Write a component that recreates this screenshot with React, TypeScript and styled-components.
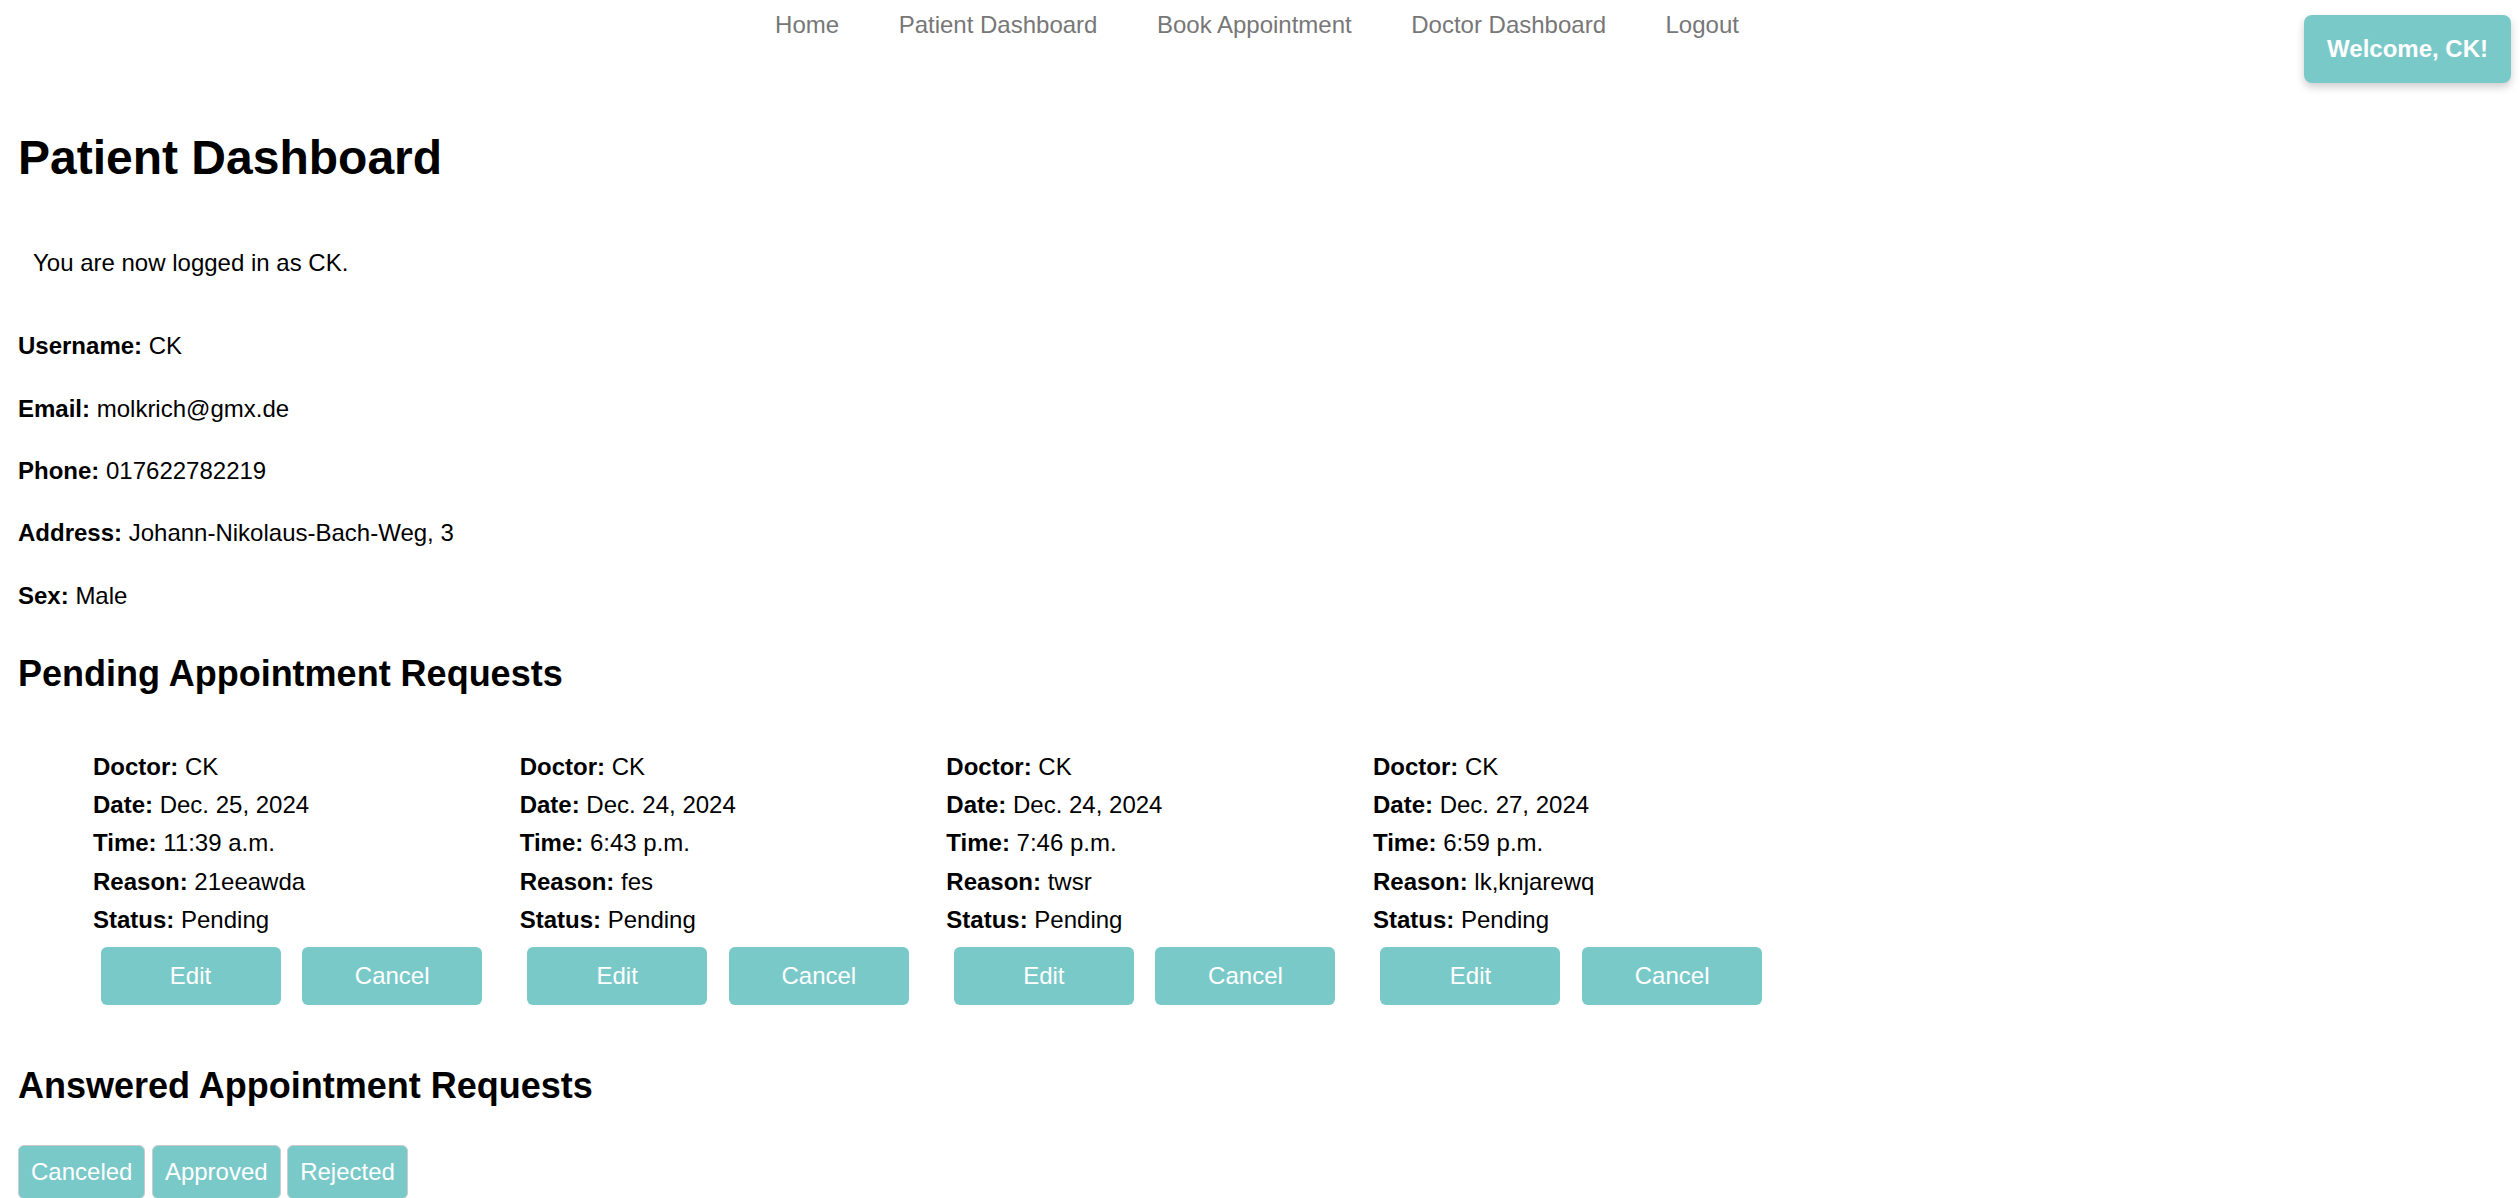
import styled, { createGlobalStyle } from 'styled-components'

const teal = '#7ac9c9'

const GlobalStyle = createGlobalStyle`
  html, body {
    margin: 0;
    padding: 0;
    background: #fff;
  }
  body {
    font-family: 'Liberation Sans', Arial, sans-serif;
    font-size: 24px;
    line-height: 1.6;
    color: #000;
  }
`

const Header = styled.header`
  display: grid;
  grid-template-columns: 1fr auto 1fr;
  align-items: start;
  height: 88px;
`

const Nav = styled.nav`
  grid-column: 2;
  display: flex;
  gap: 59.5px;
  padding-top: 5.5px;
  margin-right: 6px;
`

const NavLink = styled.a`
  color: #777;
  text-decoration: none;
  white-space: nowrap;
`

const Welcome = styled.div`
  grid-column: 3;
  justify-self: end;
  margin: 15px 9px 0 0;
  padding: 15px 23px;
  background: ${teal};
  color: #fff;
  font-weight: 700;
  line-height: 38.4px;
  border-radius: 8px;
  box-shadow: 0 4px 8px rgba(0, 0, 0, 0.2);
`

const Main = styled.main`
  padding: 0 18px;
`

const Title = styled.h1`
  font-size: 48px;
  font-weight: 700;
  margin: 32px 0;
`

const Message = styled.div`
  padding: 15px;
  margin-bottom: 30px;
`

const Detail = styled.p`
  margin: 24px 0;
`

const SectionTitle = styled.h2`
  font-size: 36px;
  font-weight: 700;
  margin: 29.9px 0;
`

const CardList = styled.ul`
  list-style: none;
  display: flex;
  margin: 24px 0;
  padding: 0 0 0 60px;
`

const Card = styled.li`
  padding: 15px;
`

const Line = styled.div`
  white-space: nowrap;
`

const ButtonRow = styled.div`
  display: flex;
  gap: 6.67px;
`

const ActionButton = styled.button`
  width: 180px;
  margin: 7.5px;
  padding: 15px 0;
  border: none;
  border-radius: 6px;
  background: ${teal};
  color: #fff;
  font-family: inherit;
  font-size: 24px;
  line-height: normal;
  cursor: pointer;
`

const Tabs = styled.div`
  display: flex;
  gap: 6.5px;
`

const Tab = styled.button`
  padding: 12px;
  border: 1px solid #ccc;
  border-radius: 6px;
  background: ${teal};
  color: #fff;
  font-family: inherit;
  font-size: 24px;
  line-height: normal;
  cursor: pointer;
`

type Appointment = {
  doctor: string
  date: string
  time: string
  reason: string
  status: string
}

const pending: Appointment[] = [
  { doctor: 'CK', date: 'Dec. 25, 2024', time: '11:39 a.m.', reason: '21eeawda', status: 'Pending' },
  { doctor: 'CK', date: 'Dec. 24, 2024', time: '6:43 p.m.', reason: 'fes', status: 'Pending' },
  { doctor: 'CK', date: 'Dec. 24, 2024', time: '7:46 p.m.', reason: 'twsr', status: 'Pending' },
  { doctor: 'CK', date: 'Dec. 27, 2024', time: '6:59 p.m.', reason: 'lk,knjarewq', status: 'Pending' },
]

const profile = [
  ['Username', 'CK'],
  ['Email', 'molkrich@gmx.de'],
  ['Phone', '017622782219'],
  ['Address', 'Johann-Nikolaus-Bach-Weg, 3'],
  ['Sex', 'Male'],
]

export default function App() {
  return (
    <>
      <GlobalStyle />
      <Header>
        <Nav>
          <NavLink href="#">Home</NavLink>
          <NavLink href="#">Patient Dashboard</NavLink>
          <NavLink href="#">Book Appointment</NavLink>
          <NavLink href="#">Doctor Dashboard</NavLink>
          <NavLink href="#">Logout</NavLink>
        </Nav>
        <Welcome>Welcome, CK!</Welcome>
      </Header>
      <Main>
        <Title>Patient Dashboard</Title>
        <Message>You are now logged in as CK.</Message>
        {profile.map(([label, value]) => (
          <Detail key={label}>
            <strong>{label}:</strong> {value}
          </Detail>
        ))}

        <SectionTitle>Pending Appointment Requests</SectionTitle>
        <CardList>
          {pending.map((a, i) => (
            <Card key={i}>
              <Line><strong>Doctor:</strong> {a.doctor}</Line>
              <Line><strong>Date:</strong> {a.date}</Line>
              <Line><strong>Time:</strong> {a.time}</Line>
              <Line><strong>Reason:</strong> {a.reason}</Line>
              <Line><strong>Status:</strong> {a.status}</Line>
              <ButtonRow>
                <ActionButton>Edit</ActionButton>
                <ActionButton>Cancel</ActionButton>
              </ButtonRow>
            </Card>
          ))}
        </CardList>

        <SectionTitle>Answered Appointment Requests</SectionTitle>
        <Tabs>
          <Tab>Canceled</Tab>
          <Tab>Approved</Tab>
          <Tab>Rejected</Tab>
        </Tabs>
      </Main>
    </>
  )
}
